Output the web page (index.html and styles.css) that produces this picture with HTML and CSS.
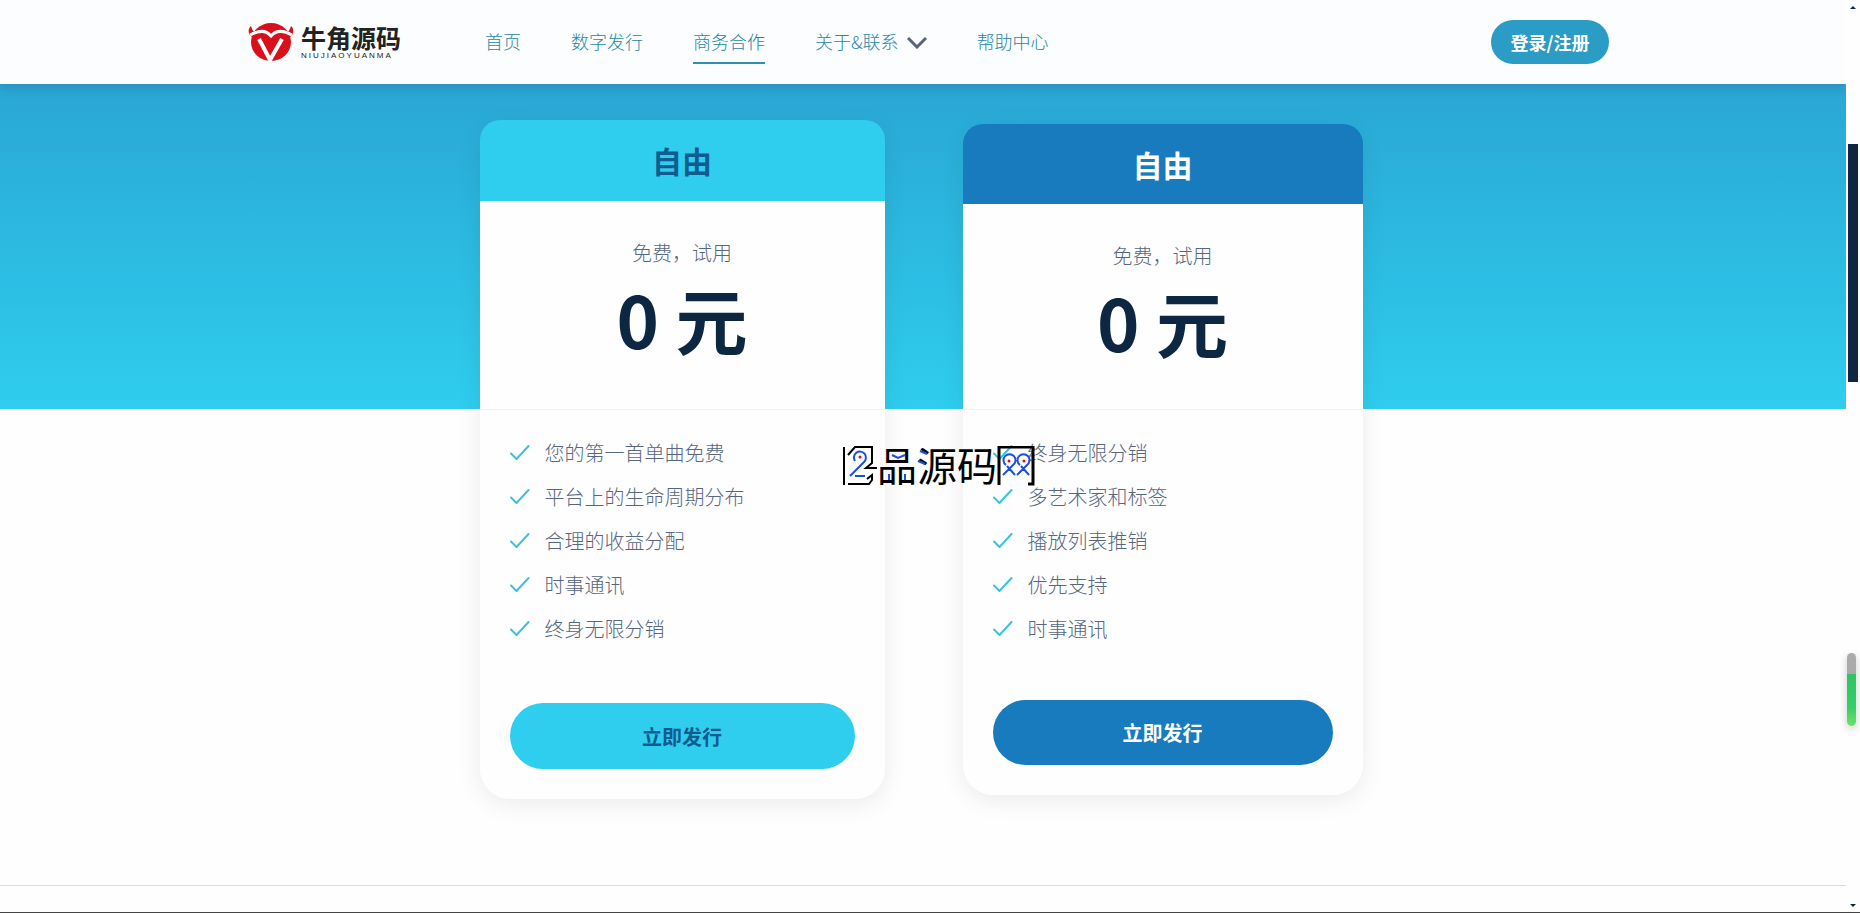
FILE: index.html
```html
<!DOCTYPE html>
<html lang="zh-CN">
<head>
    <meta charset="UTF-8">
    <meta name="viewport" content="width=device-width, initial-scale=1.0">
    <title>牛角源码 - 商务合作</title>
    <link rel="stylesheet" href="styles.css">
</head>
<body>
    <svg class="sprite" aria-hidden="true">
        <symbol id="check" viewBox="0 0 20 16">
            <path d="M1 8.500L6.500 14L18.500 1" fill="none" stroke="currentColor" stroke-width="2" stroke-linecap="round" stroke-linejoin="round"/>
        </symbol>
    </svg>
    <div class="page">
        <header class="header">
            <div class="container">
                <a class="logo" href="#">
                    <svg class="logo-icon" viewBox="0 0 48 40" aria-hidden="true">
                        <path d="M4 4C0 7 1 15 8 16L11 12C7 11 5 8 4 4Z" fill="#d7101c"/>
                        <path d="M44 4C48 7 47 15 40 16L37 12C41 11 43 8 44 4Z" fill="#d7101c"/>
                        <ellipse cx="24" cy="20" rx="20" ry="19" fill="#d7101c"/>
                        <path d="M3 13C12 8 19 8 24 14C29 8 36 8 45 13" fill="none" stroke="#fff" stroke-width="3"/>
                        <path d="M12 17L23 38L35 17" fill="none" stroke="#fff" stroke-width="4"/>
                    </svg>
                    <span class="logo-text">
                        <span class="logo-name">牛角源码</span>
                        <span class="logo-sub">NIUJIAOYUANMA</span>
                    </span>
                </a>
                <nav class="nav">
                    <a href="#">首页</a>
                    <a href="#">数字发行</a>
                    <a href="#" class="active">商务合作</a>
                    <a href="#">关于&amp;联系<svg class="arrow" viewBox="0 0 20 12" aria-hidden="true"><path d="M1 1L10 10L19 1" fill="none" stroke="#56657c" stroke-width="3"/></svg></a>
                    <a href="#">帮助中心</a>
                </nav>
                <button class="login">登录/注册</button>
            </div>
        </header>

        <main class="pricing">
            <div class="card featured">
                <h2>自由</h2>
                <div class="price">
                    <p>免费，试用</p>
                    <strong>0 元</strong>
                </div>
                <ul>
                    <li><svg><use href="#check"/></svg>您的第一首单曲免费</li>
                    <li><svg><use href="#check"/></svg>平台上的生命周期分布</li>
                    <li><svg><use href="#check"/></svg>合理的收益分配</li>
                    <li><svg><use href="#check"/></svg>时事通讯</li>
                    <li><svg><use href="#check"/></svg>终身无限分销</li>
                </ul>
                <button>立即发行</button>
            </div>
            <div class="card">
                <h2>自由</h2>
                <div class="price">
                    <p>免费，试用</p>
                    <strong>0 元</strong>
                </div>
                <ul>
                    <li><svg><use href="#check"/></svg>终身无限分销</li>
                    <li><svg><use href="#check"/></svg>多艺术家和标签</li>
                    <li><svg><use href="#check"/></svg>播放列表推销</li>
                    <li><svg><use href="#check"/></svg>优先支持</li>
                    <li><svg><use href="#check"/></svg>时事通讯</li>
                </ul>
                <button>立即发行</button>
            </div>
        </main>
    </div>

    <!-- scroll track -->
    <div class="track" aria-hidden="true">
        <svg class="up" viewBox="0 0 6 3"><path d="M0 3L3 0L6 3Z"/></svg>
        <div class="thumb"></div>
        <div class="progress"></div>
        <svg class="down" viewBox="0 0 6 3"><path d="M0 0L3 3L6 0Z"/></svg>
    </div>

    <!-- floating stamp -->
    <div class="stamp">
        <svg class="stamp-pin" viewBox="0 0 34 40" fill="none" stroke-width="2" aria-hidden="true">
            <path d="M1 1V39M5 9L12 1H29V17L23 22H34" stroke="#000"/>
            <path d="M5 38H26L29 34V29L24 33" stroke="#000"/>
            <path d="M12 15A6 6 0 1 1 21 16L7 30M12 30H22" stroke="#1b4fe0"/>
            <circle cx="17" cy="11" r="1.500" fill="#e01010"/>
        </svg>
        <span>品源码</span>
        <svg class="stamp-eyes" viewBox="0 0 38 40" fill="none" stroke-width="2" aria-hidden="true">
            <path d="M2 39V1H36V38H31" stroke="#000" stroke-width="3"/>
            <path d="M9 19A6 6 0 1 1 16 19L6 29M10 20L18 29M23 19A6 6 0 1 1 30 19L20 29M24 20L32 29" stroke="#1b4fe0"/>
            <circle cx="12" cy="15" r="1.500" fill="#e01010"/>
            <circle cx="27" cy="15" r="1.500" fill="#e01010"/>
        </svg>
        <svg class="stamp-marks" viewBox="0 0 120 40" fill="none" stroke="#1b4fe0" stroke-width="2" aria-hidden="true">
            <path d="M15 9L21 12L28 9M12 28V34M28 28V34M43 5L50 8M41 15L48 18"/>
        </svg>
    </div>
</body>
</html>
```
FILE: styles.css
```css
* {
    box-sizing: border-box;
}
body {
    margin: 0;
    min-height: 100vh;
    display: flex;
    font-family: "Noto Sans CJK SC", sans-serif;
    font-weight: 300;
    color: #56677f;
    background: #fefefe;
    border-bottom: 1px solid #444;
}
h2, p, ul {
    margin: 0;
    padding: 0;
}
button {
    font-family: inherit;
    font-weight: 700;
    border: none;
    cursor: pointer;
}
.sprite {
    position: absolute;
    width: 0;
    height: 0;
}
.page {
    flex: 1;
}

/* header */
.header {
    position: relative;
    background: #fcfdfe;
    box-shadow: 0 2px 10px rgba(60, 60, 120, 0.3);
}
.container {
    max-width: 1372px;
    height: 84px;
    margin: 0 auto;
    padding-left: 10px;
    display: flex;
    align-items: center;
}
.logo {
    display: flex;
    align-items: center;
    gap: 6px;
    margin-right: 84px;
    color: #222;
    text-decoration: none;
}
.logo-icon {
    width: 48px;
    height: 40px;
}
.logo-text {
    display: flex;
    flex-direction: column;
    width: 100px;
}
.logo-name {
    font-size: 25px;
    line-height: 28px;
    font-weight: 700;
}
.logo-sub {
    font: 400 8px/10px "Liberation Sans", sans-serif;
    letter-spacing: 2px;
    white-space: nowrap;
}
.nav {
    display: flex;
    gap: 50px;
    flex: 1;
}
.nav a {
    font-size: 18px;
    line-height: 42px;
    color: #1f88a5;
    text-decoration: none;
    border-bottom: 2px solid transparent;
}
.nav a.active {
    border-color: #2b93ae;
}
.arrow {
    width: 20px;
    height: 12px;
    margin-left: 8px;
}
.login {
    width: 118px;
    height: 44px;
    padding: 0;
    border-radius: 22px;
    font-size: 18px;
    color: #fff;
    background: #2a9cc6;
}

/* pricing cards */
.pricing {
    display: flex;
    justify-content: center;
    align-items: center;
    gap: 78px;
    padding: 36px 4px 86px 0;
    border-bottom: 1px solid #ddd;
    background: linear-gradient(#29a7d4, #2fcdee) no-repeat top / 100% 325px;
}
.card {
    width: 400px;
    padding-bottom: 30px;
    border-radius: 30px;
    background: #fefefe;
    box-shadow: 0 5px 25px rgba(0, 0, 0, 0.08);
}
.card h2 {
    border-radius: 20px 20px 0 0;
    font-size: 30px;
    line-height: 80px;
    text-align: center;
    color: #fff;
    background: #177bbd;
}
.price {
    height: 206px;
    padding-top: 37px;
    border-bottom: 1px solid #f0f0f0;
    text-align: center;
}
.price p {
    font-size: 20px;
    line-height: 30px;
}
.price strong {
    display: block;
    font-size: 72px;
    line-height: 100px;
    font-weight: 700;
    color: #0d2743;
}
.card ul {
    padding: 21px 30px 49px;
    list-style: none;
}
.card li {
    display: flex;
    align-items: center;
    gap: 15px;
    font-size: 20px;
    line-height: 44px;
}
.card li svg {
    width: 20px;
    height: 16px;
    color: #3cc3da;
}
.card button {
    display: block;
    width: calc(100% - 60px);
    height: 65px;
    margin: 0 auto;
    border-radius: 33px;
    font-size: 20px;
    color: #fff;
    background: #177bbd;
}
.featured {
    width: 405px;
}
.featured h2 {
    line-height: 81px;
}
.featured .price {
    height: 209px;
}
.featured ul {
    padding-bottom: 52px;
}
.featured button {
    height: 66px;
}
.featured h2, .featured button {
    color: #0f5c90;
    background: #2fcdee;
}

/* scroll track */
.track {
    position: relative;
    width: 14px;
    background: #fefefe;
}
.up, .down {
    position: absolute;
    left: 4px;
    width: 6px;
    height: 3px;
    fill: #0d2743;
}
.up {
    top: 6px;
}
.down {
    bottom: 5px;
}
.thumb {
    position: absolute;
    top: 144px;
    left: 2px;
    width: 10px;
    height: 238px;
    background: #0d2743;
}
.progress {
    position: absolute;
    top: 653px;
    left: 1px;
    width: 9px;
    height: 73px;
    border-radius: 5px;
    background: linear-gradient(#aaa 21px, #2fc463 21px, #35cf66 55px, #6be368);
    box-shadow: 0 3px 8px rgba(0, 0, 0, 0.2);
}

/* floating stamp */
.stamp {
    position: absolute;
    top: 446px;
    left: 843px;
    display: flex;
    align-items: center;
    font-size: 40px;
    line-height: 36px;
    font-weight: 400;
    color: #000;
}
.stamp-pin {
    width: 34px;
    height: 40px;
}
.stamp span {
    height: 40px;
}
.stamp-eyes {
    width: 38px;
    height: 40px;
}
.stamp-marks {
    position: absolute;
    top: 0;
    left: 34px;
    width: 120px;
    height: 40px;
}
```
